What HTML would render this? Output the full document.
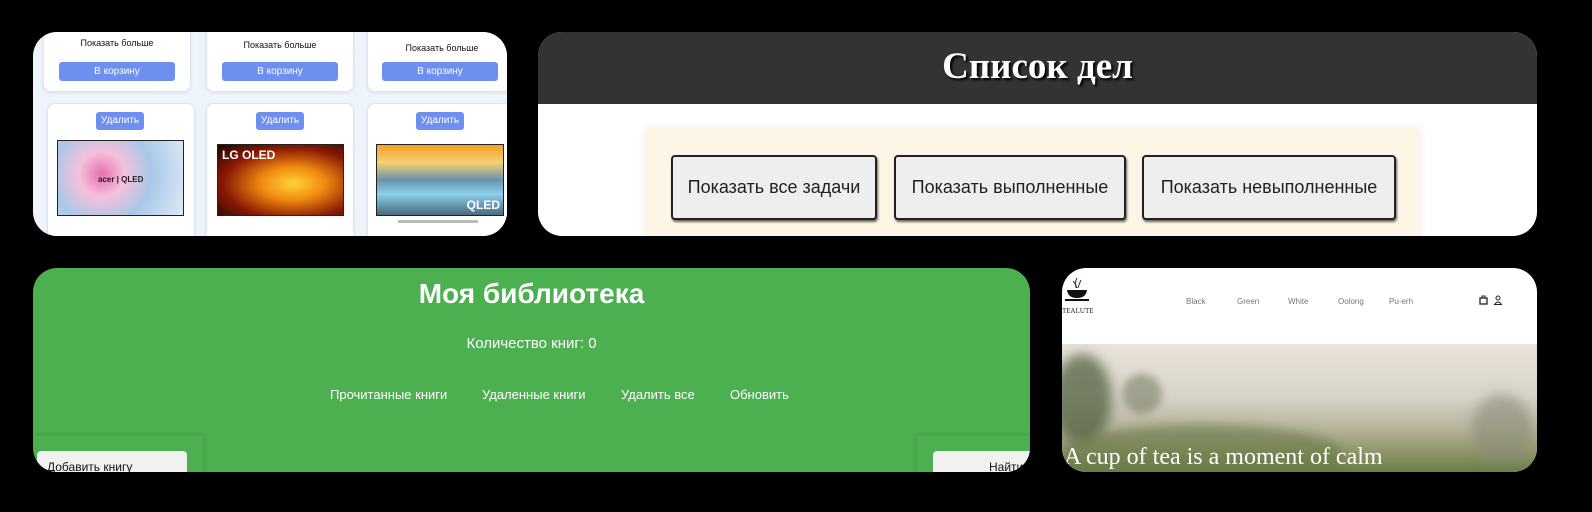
<!DOCTYPE html>
<html style="width:1592px;height:512px;overflow:hidden"><head><meta charset="utf-8"><style>
*{box-sizing:border-box;margin:0;padding:0}
body{width:1592px;height:512px;background:#000;position:relative;overflow:hidden;font-family:"Liberation Sans",sans-serif}
.p{position:absolute;overflow:hidden;border-radius:24px}
.card{position:absolute;background:#fff;border:1px solid #dde6f0;border-radius:8px;box-shadow:0 1px 3px rgba(0,0,0,.08)}
.btnb{position:absolute;background:#6d8ff0;color:#fff;font-size:10px;text-align:center;border-radius:3px}
.sm{position:absolute;font-size:9px;color:#111;text-align:center}
.tv{position:absolute;border:1px solid #222}
.tb{position:absolute;top:123px;height:65px;border:2px solid #222;border-radius:4px;background:#eee;font-size:18px;color:#222;display:flex;align-items:center;justify-content:center;box-shadow:1px 2px 2px rgba(0,0,0,.6)}
.nav{position:absolute;top:29px;font-size:8px;color:#777}
</style></head><body>

<div class="p" style="left:33px;top:32px;width:474px;height:204px;background:#eef4fb">
  <div class="card" style="left:10px;top:-10px;width:148px;height:70px"></div>
  <div class="card" style="left:173px;top:-10px;width:148px;height:70px"></div>
  <div class="card" style="left:334px;top:-10px;width:150px;height:70px"></div>
  <div class="sm" style="left:10px;top:6px;width:148px">Показать больше</div>
  <div class="sm" style="left:173px;top:8px;width:148px">Показать больше</div>
  <div class="sm" style="left:334px;top:11px;width:150px">Показать больше</div>
  <div class="btnb" style="left:26px;top:30px;width:116px;height:19px;line-height:19px">В корзину</div>
  <div class="btnb" style="left:189px;top:30px;width:116px;height:19px;line-height:19px">В корзину</div>
  <div class="btnb" style="left:349px;top:30px;width:116px;height:19px;line-height:19px">В корзину</div>
  <div class="card" style="left:14px;top:71px;width:148px;height:150px"></div>
  <div class="card" style="left:173px;top:71px;width:148px;height:150px"></div>
  <div class="card" style="left:334px;top:71px;width:150px;height:150px"></div>
  <div class="btnb" style="left:63px;top:80px;width:48px;height:18px;line-height:18px">Удалить</div>
  <div class="btnb" style="left:223px;top:80px;width:48px;height:18px;line-height:18px">Удалить</div>
  <div class="btnb" style="left:383px;top:80px;width:48px;height:18px;line-height:18px">Удалить</div>
  <div class="tv" style="left:24px;top:108px;width:127px;height:76px;background:radial-gradient(circle at 35% 45%,#e86fb0,#f4c0dc 25%,#a8c8e8 55%,#dfe9f5)"><span style="position:absolute;left:40px;top:34px;font-size:8px;font-weight:bold;color:#222">acer | QLED</span></div>
  <div class="tv" style="left:184px;top:112px;width:127px;height:72px;background:radial-gradient(ellipse at 60% 55%,#ffd23a,#f08a10 30%,#8a1a05 65%,#1a0502)"><span style="position:absolute;left:4px;top:3px;font-size:12px;font-weight:bold;color:#fff">LG OLED</span></div>
  <div class="tv" style="left:343px;top:112px;width:128px;height:72px;background:linear-gradient(180deg,#f2a02a,#f6d070 25%,#6a90b0 50%,#8ad0e8 70%,#4a6a80)"><span style="position:absolute;right:3px;bottom:3px;font-size:12px;font-weight:bold;color:#fff">QLED</span></div>
  <div style="position:absolute;left:365px;top:188px;width:80px;height:3px;background:#bbb"></div>
</div>

<div class="p" style="left:538px;top:32px;width:999px;height:204px;background:#fff">
  <div style="position:absolute;left:0;top:0;width:100%;height:72px;background:#333;color:#fff;font-family:'Liberation Serif',serif;font-weight:bold;font-size:37px;text-align:center;line-height:70px;text-shadow:2px 2px 2px #000">Список дел</div>
  <div style="position:absolute;left:107px;top:96px;width:775px;height:120px;background:#fdf5e6;box-shadow:0 0 8px rgba(0,0,0,.08)"></div>
  <div class="tb" style="left:133px;width:206px">Показать все задачи</div>
  <div class="tb" style="left:356px;width:232px">Показать выполненные</div>
  <div class="tb" style="left:604px;width:254px">Показать невыполненные</div>
</div>

<div class="p" style="left:33px;top:268px;width:997px;height:204px;background:#4caf50;color:#fff">
  <div style="position:absolute;left:0;width:100%;top:10px;text-align:center;font-size:28px;font-weight:bold">Моя библиотека</div>
  <div style="position:absolute;left:0;width:100%;top:67px;text-align:center;font-size:15px">Количество книг: 0</div>
  <div style="position:absolute;left:297px;top:119px;font-size:13px">Прочитанные книги</div>
  <div style="position:absolute;left:449px;top:119px;font-size:13px">Удаленные книги</div>
  <div style="position:absolute;left:588px;top:119px;font-size:13px">Удалить все</div>
  <div style="position:absolute;left:697px;top:119px;font-size:13px">Обновить</div>
  <div style="position:absolute;left:0;top:168px;width:170px;height:40px;box-shadow:0 0 6px rgba(0,0,0,.15)"></div>
  <div style="position:absolute;left:4px;top:183px;width:150px;height:30px;background:#f1f1f1;border-radius:4px;color:#111;font-size:12px;padding:9px 0 0 10px">Добавить книгу</div>
  <div style="position:absolute;left:884px;top:168px;width:120px;height:40px;box-shadow:0 0 6px rgba(0,0,0,.15)"></div>
  <div style="position:absolute;left:900px;top:183px;width:110px;height:30px;background:#f1f1f1;border-radius:4px;color:#111;font-size:12px;padding:9px 0 0 56px">Найти</div>
</div>

<div class="p" style="left:1062px;top:268px;width:475px;height:204px;background:#fff">
  <svg style="position:absolute;left:2px;top:8px" width="26" height="34" viewBox="0 0 26 34"><path d="M13 2q-3 5 0 10M9 5q3 3 3 7M17 4q-2 4-3 8" stroke="#333" fill="none"/><path d="M3 14h20q-1 8-10 8T3 14z" fill="#111"/><rect x="1" y="23" width="24" height="2" fill="#111"/></svg>
  <div style="position:absolute;left:0;top:39px;font-family:'Liberation Serif',serif;font-size:7px;color:#222">TEALUTE</div>
  <div class="nav" style="left:124px">Black</div>
  <div class="nav" style="left:175px">Green</div>
  <div class="nav" style="left:226px">White</div>
  <div class="nav" style="left:276px">Oolong</div>
  <div class="nav" style="left:327px">Pu-erh</div>
  <svg style="position:absolute;left:417px;top:27px" width="24" height="10" viewBox="0 0 24 10"><rect x="1" y="3" width="7" height="6" fill="none" stroke="#222" stroke-width="1.3"/><path d="M3 3V1h3v2" fill="none" stroke="#222"/><circle cx="19" cy="3" r="2" fill="none" stroke="#222"/><path d="M15.5 9.5q3.5-5 7 0z" fill="none" stroke="#222"/></svg>
  <div style="position:absolute;left:0;top:76px;width:100%;height:128px;background:linear-gradient(180deg,#e9e3da 0%,#d9d4c8 40%,#b8b59e 65%,#8c9468 85%,#6c7e48 100%);overflow:hidden">
    <div style="position:absolute;left:-10px;top:10px;width:60px;height:90px;background:#4a5a3a;border-radius:50%;filter:blur(6px);opacity:.7"></div>
    <div style="position:absolute;left:60px;top:30px;width:40px;height:40px;background:#7a806a;border-radius:50%;filter:blur(4px);opacity:.6"></div>
    <div style="position:absolute;left:410px;top:50px;width:60px;height:70px;background:#8a8a78;border-radius:50%;filter:blur(6px);opacity:.6"></div>
    <div style="position:absolute;left:0;top:80px;width:280px;height:60px;background:#6a7a46;border-radius:50% 50% 0 0;filter:blur(5px);opacity:.6"></div>
    <div style="position:absolute;left:2px;top:100px;font-family:'Liberation Serif',serif;font-size:24px;color:#fff;white-space:nowrap">A cup of tea is a moment of calm</div>
  </div>
</div>
</body></html>
